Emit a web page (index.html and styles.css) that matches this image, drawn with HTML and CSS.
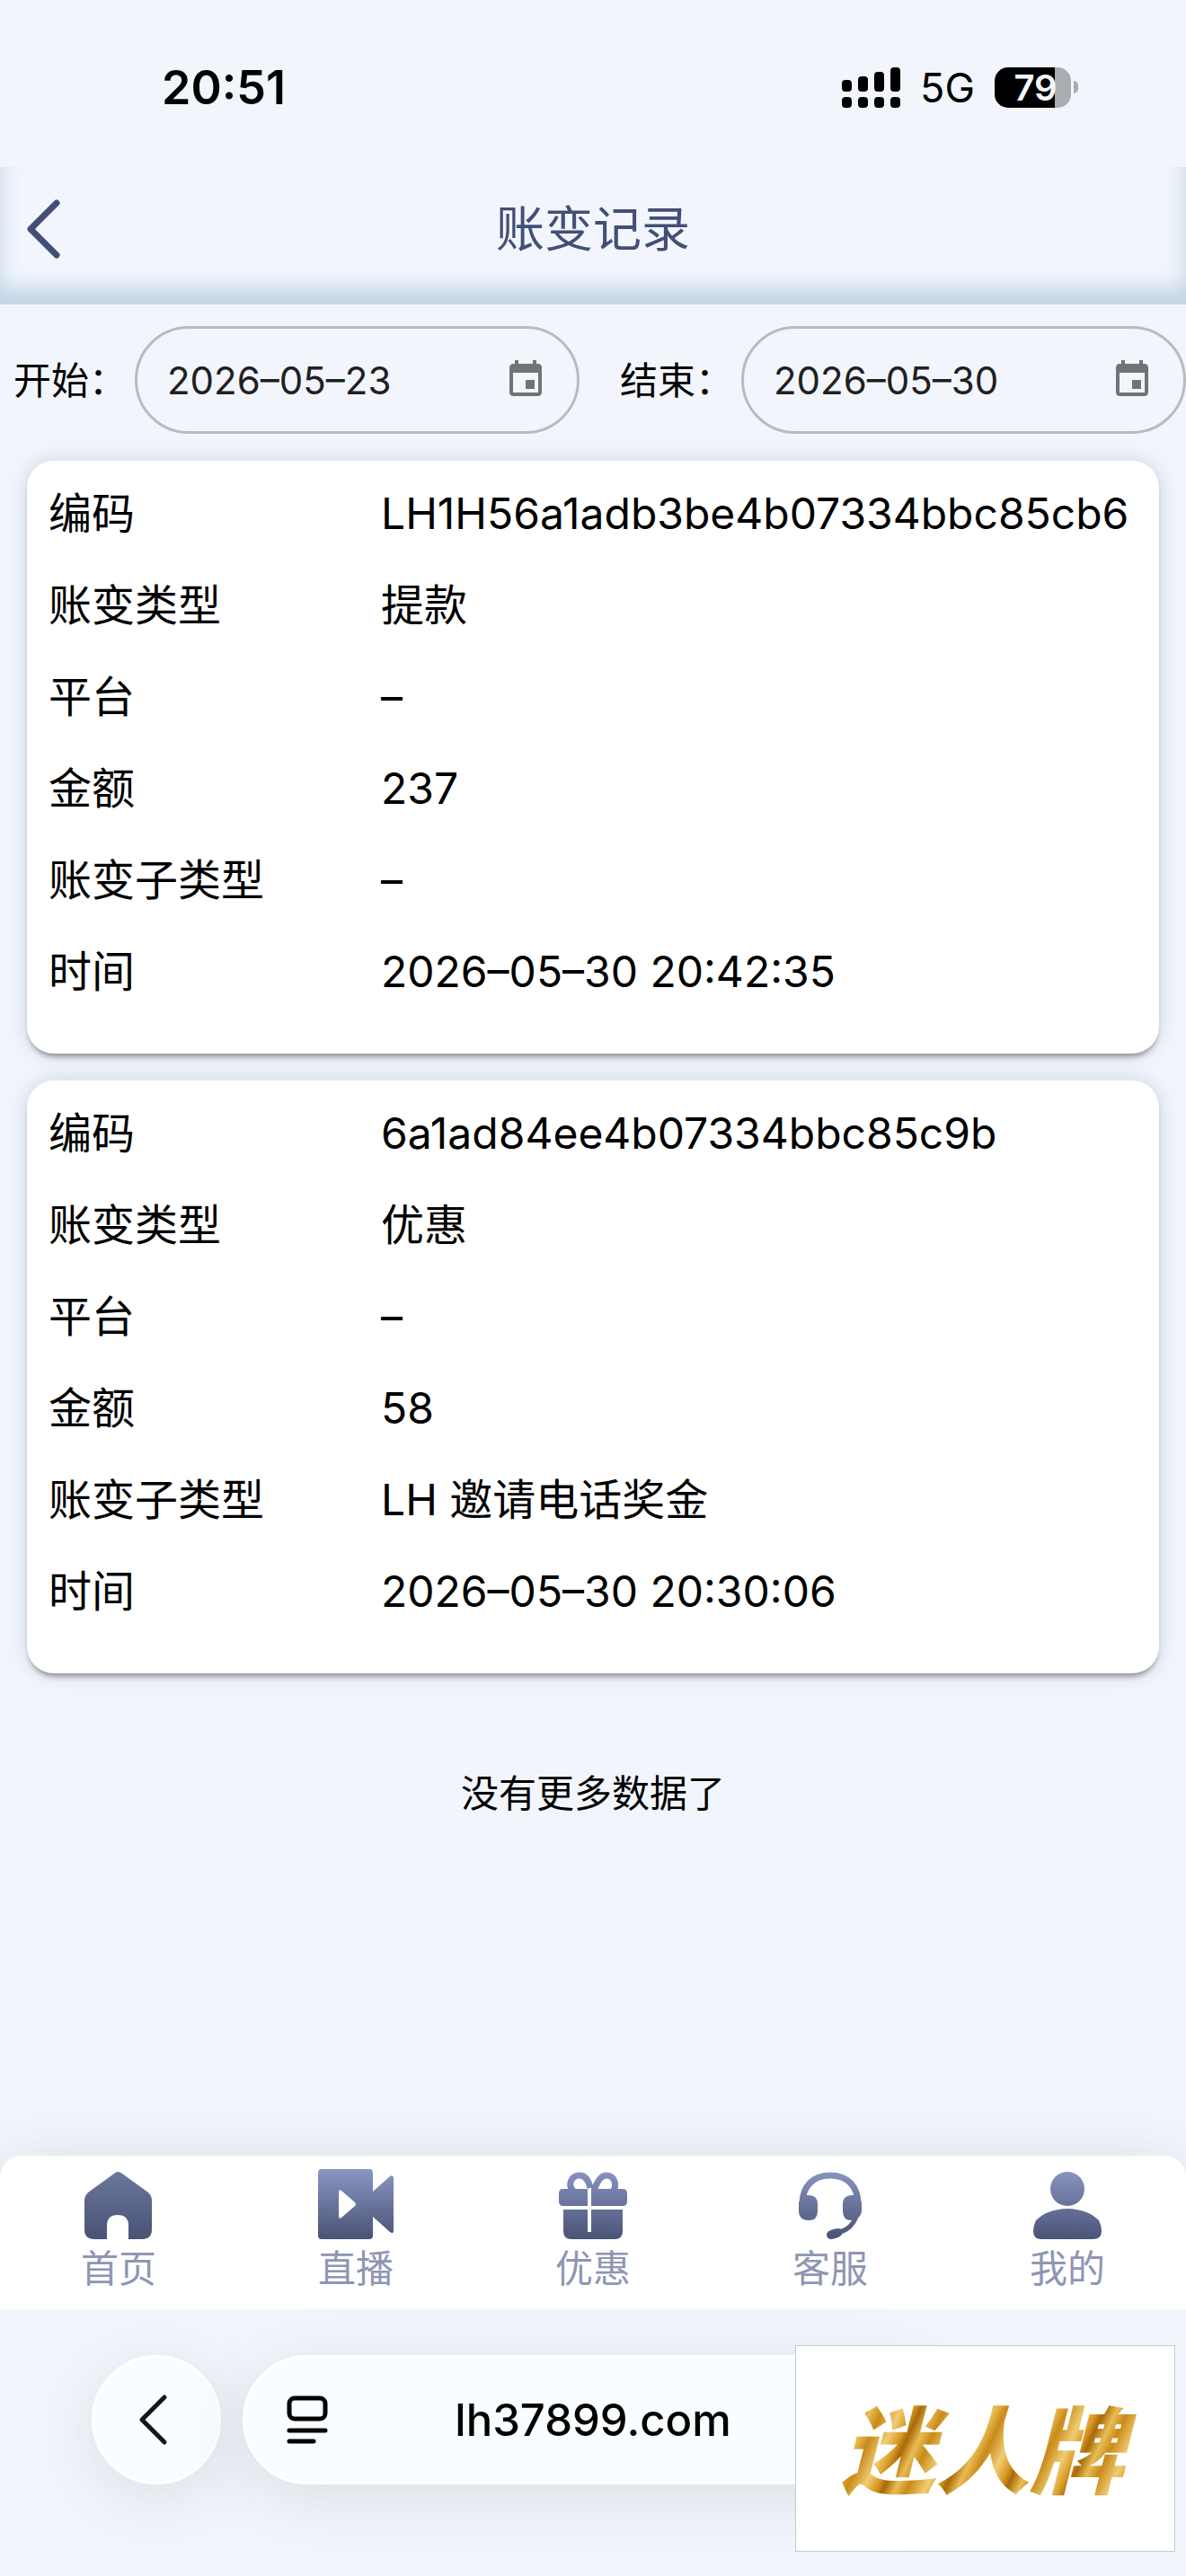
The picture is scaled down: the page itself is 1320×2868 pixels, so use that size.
FILE: index.html
```html
<!DOCTYPE html>
<html lang="zh-CN">

<head>
    <meta charset="UTF-8">
    <meta name="viewport" content="width=device-width, initial-scale=1.0">
    <title>账变记录</title>
    <link rel="stylesheet" href="styles.css">
</head>

<body>
    <div class="status-bar">
        <span class="time">20:51</span>
        <div class="status-icons">
            <svg class="signal" width="65" height="45" viewBox="0 0 65 45">
                <rect x="0" y="14" width="11" height="13" rx="4" />
                <rect x="18" y="10" width="11" height="17" rx="4" />
                <rect x="36" y="5" width="11" height="22" rx="4" />
                <rect x="54" y="0" width="11" height="27" rx="4" />
                <rect x="0" y="33" width="11" height="12" rx="4" />
                <rect x="18" y="33" width="11" height="12" rx="4" />
                <rect x="36" y="33" width="11" height="12" rx="4" />
                <rect x="54" y="33" width="11" height="12" rx="4" />
            </svg>
            <span class="network">5G</span>
            <div class="battery"><span class="battery-level">79</span></div>
        </div>
    </div>

    <header class="header">
        <button class="back-button" type="button" aria-label="返回">
            <svg width="40" height="70" viewBox="0 0 40 70" fill="none" stroke="#424f76" stroke-width="7" stroke-linecap="round" stroke-linejoin="round">
                <path d="M33 6L4 35L33 64" />
            </svg>
        </button>
        <h1>账变记录</h1>
    </header>

    <main>
        <form class="filter">
            <label for="startDate">开始：</label>
            <div class="date-box">
                <input type="text" id="startDate" value="2026–05–23">
                <button type="button" aria-label="选择开始日期">
                    <svg width="48" height="48" viewBox="0 0 24 24">
                        <path d="M17 12h-5v5h5v-5zM16 1v2H8V1H6v2H5c-1.11 0-1.99.9-1.99 2L3 19c0 1.1.89 2 2 2h14c1.1 0 2-.9 2-2V5c0-1.1-.9-2-2-2h-1V1h-2zm3 18H5V8h14v11z" />
                    </svg>
                </button>
            </div>
            <label for="endDate">结束：</label>
            <div class="date-box">
                <input type="text" id="endDate" value="2026–05–30">
                <button type="button" aria-label="选择结束日期">
                    <svg width="48" height="48" viewBox="0 0 24 24">
                        <path d="M17 12h-5v5h5v-5zM16 1v2H8V1H6v2H5c-1.11 0-1.99.9-1.99 2L3 19c0 1.1.89 2 2 2h14c1.1 0 2-.9 2-2V5c0-1.1-.9-2-2-2h-1V1h-2zm3 18H5V8h14v11z" />
                    </svg>
                </button>
            </div>
        </form>

        <div class="records">
            <dl class="card">
                <dt>编码</dt>
                <dd>LH1H56a1adb3be4b07334bbc85cb6</dd>
                <dt>账变类型</dt>
                <dd>提款</dd>
                <dt>平台</dt>
                <dd>–</dd>
                <dt>金额</dt>
                <dd>237</dd>
                <dt>账变子类型</dt>
                <dd>–</dd>
                <dt>时间</dt>
                <dd>2026–05–30 20:42:35</dd>
            </dl>

            <dl class="card">
                <dt>编码</dt>
                <dd>6a1ad84ee4b07334bbc85c9b</dd>
                <dt>账变类型</dt>
                <dd>优惠</dd>
                <dt>平台</dt>
                <dd>–</dd>
                <dt>金额</dt>
                <dd>58</dd>
                <dt>账变子类型</dt>
                <dd>LH 邀请电话奖金</dd>
                <dt>时间</dt>
                <dd>2026–05–30 20:30:06</dd>
            </dl>
        </div>

        <p class="no-more">没有更多数据了</p>
    </main>

    <nav class="tab-bar">
        <a href="#home">
            <svg width="84" height="78" viewBox="-4 -3 84 78">
                <defs>
                    <linearGradient id="tabFill" gradientUnits="userSpaceOnUse" x1="0" y1="0" x2="0" y2="75">
                        <stop offset="0" stop-color="#8793c0" />
                        <stop offset="1" stop-color="#4a5376" />
                    </linearGradient>
                    <linearGradient id="homeFill" gradientUnits="userSpaceOnUse" x1="0" y1="0" x2="0" y2="75">
                        <stop offset="0" stop-color="#6a769b" />
                        <stop offset="1" stop-color="#4a5376" />
                    </linearGradient>
                </defs>
                <path fill="url(#homeFill)" d="M33 2Q37 -2 42 2L71 23Q75 27 75 32V64Q75 75 64 75H49V60Q49 48 37 48Q25 48 25 60V75H11Q0 75 0 64V32Q0 27 4 23Z" />
            </svg>
            首页
        </a>
        <a href="#live">
            <svg width="84" height="78" viewBox="0 -3 84 78">
                <path fill="url(#tabFill)" fill-rule="evenodd" d="M4 -3H57Q61 -3 61 1V22L80 5Q84 3 84 7V65Q84 70 80 67L61 50V71Q61 75 57 75H4Q0 75 0 71V1Q0 -3 4 -3ZM23 23V50Q23 53 26 51L41 38Q43 36 41 34L26 21Q23 19 23 23Z" />
            </svg>
            直播
        </a>
        <a href="#promo">
            <svg width="84" height="78" viewBox="-4 -3 84 78">
                <g fill="url(#tabFill)">
                    <path d="M5 19H32V38H5Q0 38 0 33V24Q0 19 5 19ZM36 19H71Q76 19 76 24V33Q76 38 71 38H36Z" />
                    <path d="M5 42H32V67H36V42H71V66Q71 75 62 75H14Q5 75 5 66Z" />
                </g>
                <path fill="none" stroke="url(#tabFill)" stroke-width="7" d="M35 18C33 9 29 4 23 4C14 4 10 14 15 20C17 23 19 24 21 24M39 20C44 9 47 4 53 4C61 4 65 13 61 21" />
            </svg>
            优惠
        </a>
        <a href="#service">
            <svg width="84" height="78" viewBox="-7 -3 84 78">
                <path fill="none" stroke="url(#tabFill)" stroke-width="7" d="M4 36C4 16 16 4 35 4C54 4 66 16 66 36" />
                <path fill="none" stroke="url(#tabFill)" stroke-width="5" d="M64 50C61 58 56 64 46 67" />
                <g fill="url(#tabFill)">
                    <path d="M0 34L4 26H11Q21 26 21 36V44Q21 54 11 54Q0 54 0 43Z" />
                    <path d="M70 34L66 26H59Q49 26 49 36V44Q49 54 59 54H62Q70 50 70 43Z" />
                    <path d="M38 64L44 63Q51 64 48 70L44 73L37 75Q31 75 31 70Q31 66 38 64Z" />
                </g>
            </svg>
            客服
        </a>
        <a href="#mine">
            <svg width="84" height="78" viewBox="-4 -3 84 78">
                <g fill="url(#tabFill)">
                    <circle cx="38" cy="19" r="19" />
                    <path d="M38 41C52 41 65 46 73 54Q76 60 76 66Q76 75 66 75H9Q0 75 0 66Q0 60 3 54C11 46 24 41 38 41Z" />
                </g>
            </svg>
            我的
        </a>
    </nav>

    <footer class="browser-bar">
        <button class="browser-back" type="button" aria-label="后退">
            <svg width="36" height="60" viewBox="0 0 36 60" fill="none" stroke="#14161f" stroke-width="5" stroke-linecap="round" stroke-linejoin="round">
                <path d="M30 5L5 30L30 55" />
            </svg>
        </button>
        <div class="address">
            <svg width="46" height="54" viewBox="0 0 46 54" fill="none" stroke="#000" stroke-width="5" stroke-linecap="round">
                <rect x="3" y="3" width="40" height="23" rx="6" />
                <path d="M3 39H43M3 51H30" />
            </svg>
            <span>lh37899.com</span>
        </div>
        <div class="logo"><span>迷人牌</span></div>
    </footer>
</body>

</html>
```
FILE: styles.css
```css
* {
    box-sizing: border-box;
}

body {
    font-family: Inter, "Noto Sans CJK SC", sans-serif;
    background-color: #f2f6fc;
    color: #000;
    margin: 0;
    min-height: 100vh;
    display: flex;
    flex-direction: column;
}

button {
    display: flex;
    align-items: center;
    justify-content: center;
    padding: 0;
    border: none;
    background: none;
    cursor: pointer;
}

/* status bar */
.status-bar {
    display: flex;
    justify-content: space-between;
    align-items: center;
    height: 186px;
    padding: 8px 120px 0 180px;
}

.time {
    font-size: 52px;
    font-weight: 600;
}

.status-icons {
    display: flex;
    align-items: center;
    gap: 22px;
}

.network {
    font-size: 45px;
}

.battery {
    display: flex;
    align-items: center;
}

.battery-level {
    width: 85px;
    height: 45px;
    padding-left: 6px;
    border-radius: 15px;
    background: linear-gradient(to right, #000 67px, #a8adb1 67px);
    color: #f2f6fc;
    font-size: 40px;
    font-weight: 600;
    line-height: 45px;
    text-align: center;
}

.battery::after {
    content: "";
    width: 5px;
    height: 14px;
    margin-left: 3px;
    border-radius: 0 5px 5px 0;
    background-color: #a8adb1;
}

/* header */
.header {
    display: grid;
    grid-template-columns: 100px 1fr 100px;
    align-items: center;
    height: 153px;
    padding-bottom: 15px;
    box-shadow: inset 0 -18px 24px #c2d4e5;
}

.back-button {
    height: 100px;
}

.header h1 {
    margin: 0;
    padding-bottom: 8px;
    color: #424f76;
    font-size: 54px;
    font-weight: 400;
    text-align: center;
}

main {
    flex: 1;
}

/* date filter */
.filter {
    display: flex;
    align-items: center;
    padding: 24px 0 30px 15px;
}

.filter label {
    flex: none;
    width: 135px;
    padding-bottom: 6px;
    font-size: 42px;
}

.date-box {
    display: flex;
    align-items: center;
    flex: 1;
    min-width: 0;
    height: 120px;
    padding: 0 33px;
    border: 3px solid #b8bbc0;
    border-radius: 60px;
}

.date-box + label {
    margin-left: 45px;
}

.date-box input {
    flex: 1;
    min-width: 0;
    padding: 0;
    border: none;
    outline: none;
    background: none;
    color: #1f2022;
    font-family: inherit;
    font-size: 42px;
}

.date-box svg {
    fill: #717377;
}

/* records */
.records {
    display: flex;
    flex-direction: column;
    gap: 30px;
    padding: 0 30px;
}

.card {
    display: grid;
    grid-template-columns: 370px 1fr;
    margin: 0;
    padding: 8px 24px 40px;
    border-radius: 30px;
    background-color: #fff;
    box-shadow: 0 6px 6px -3px rgba(0, 0, 0, 0.4), 0 0 24px rgba(60, 70, 110, 0.2);
    font-size: 48px;
    line-height: 102px;
}

.card dd {
    margin: 0;
}

.no-more {
    margin: 104px 0;
    font-size: 42px;
    line-height: 60px;
    text-align: center;
}

/* bottom tabs */
.tab-bar {
    display: flex;
    height: 171px;
    padding-top: 15px;
    border-radius: 24px 24px 0 0;
    background-color: #fff;
    box-shadow: 0 0 60px rgba(60, 60, 80, 0.12);
}

.tab-bar a {
    flex: 1;
    display: flex;
    flex-direction: column;
    align-items: center;
    color: #8f95b4;
    font-size: 42px;
    line-height: 66px;
    text-decoration: none;
}

/* browser bar */
.browser-bar {
    position: relative;
    display: flex;
    gap: 24px;
    height: 297px;
    padding: 51px 270px 0 102px;
    background-color: #f2f6fc;
    overflow: hidden;
}

.browser-back,
.address {
    height: 144px;
    border: 3px solid #fff;
    border-radius: 72px;
    background-color: #f9fdff;
    box-shadow: 0 15px 75px rgba(60, 60, 80, 0.13);
}

.browser-back {
    flex: none;
    width: 144px;
    padding-right: 6px;
}

.address {
    flex: 1;
    display: grid;
    grid-template-columns: 46px 1fr 46px;
    align-items: center;
    padding: 0 46px;
    font-size: 49px;
    font-weight: 500;
    text-align: center;
}

.logo {
    position: absolute;
    top: 40px;
    right: 12px;
    display: flex;
    align-items: center;
    justify-content: center;
    width: 423px;
    height: 230px;
    border: 1px solid #c6c9cc;
    background-color: #fff;
}

.logo span {
    padding: 0 18px 8px 12px;
    background: repeating-linear-gradient(115deg, #c98a18 0, #f0cd74 18px, #d99a25 30px, #a86a08 38px, #e9bd55 50px, #c98a18 62px);
    -webkit-background-clip: text;
    background-clip: text;
    color: transparent;
    font-family: "Noto Sans CJK SC", sans-serif;
    font-size: 105px;
    font-style: italic;
    font-weight: 900;
    line-height: 120px;
}
```
